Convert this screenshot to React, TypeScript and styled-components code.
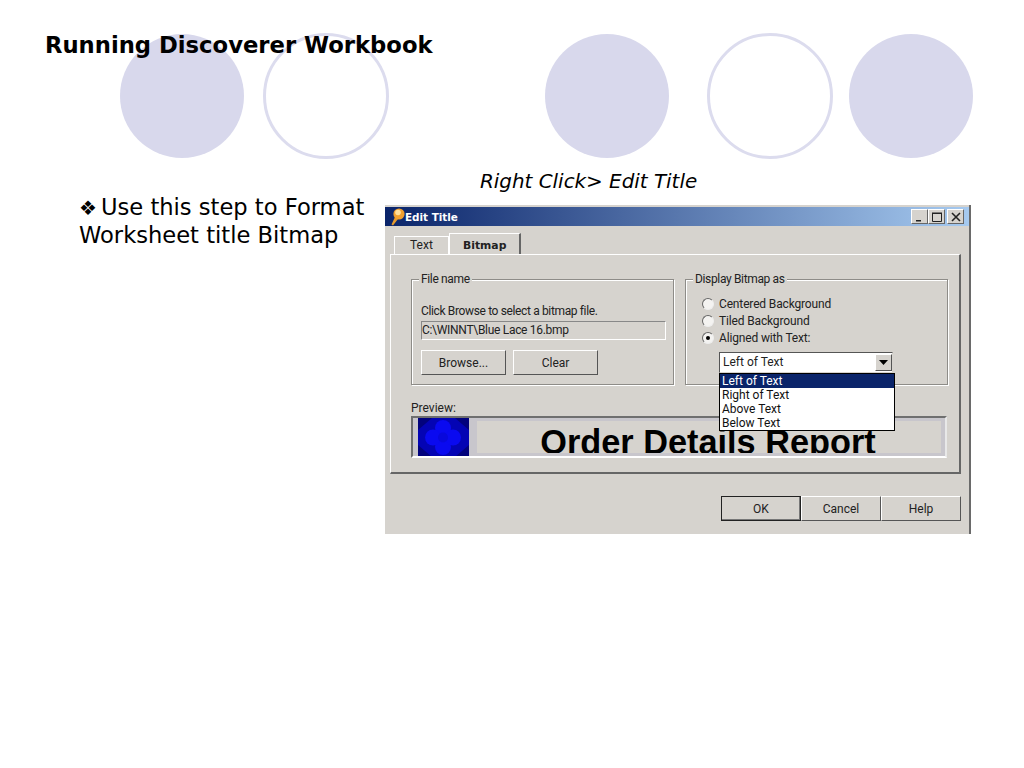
import styled, { createGlobalStyle } from 'styled-components'

const GlobalStyle = createGlobalStyle`
  html, body {
    margin: 0;
    padding: 0;
    background: #fff;
  }
`

const radioOptions = [
  { label: 'Centered Background', checked: false },
  { label: 'Tiled Background', checked: false },
  { label: 'Aligned with Text:', checked: true },
]

const menuOptions = ['Left of Text', 'Right of Text', 'Above Text', 'Below Text']

const KeyIcon = () => (
  <svg width="14" height="18" viewBox="0 0 14 18">
    <path d="M4 9 L0.5 16.5 L2 17.5 L7 11 Z" fill="#e59a2c" />
    <circle cx="8" cy="6" r="5.6" fill="#f0a030" />
    <circle cx="7" cy="4.5" r="2.8" fill="#ffdf9a" />
  </svg>
)

const LaceImage = () => (
  <svg width="51" height="39" viewBox="0 0 51 39">
    <rect width="51" height="39" fill="#0404b4" />
    <path d="M0 0 L14 0 L0 12 Z M51 0 L37 0 L51 12 Z M0 39 L14 39 L0 27 Z M51 39 L37 39 L51 27 Z" fill="#02027c" />
    <circle cx="25" cy="10" r="8" fill="#0a0af0" />
    <circle cx="25" cy="29" r="8" fill="#0a0af0" />
    <circle cx="15" cy="19.5" r="8" fill="#0a0af0" />
    <circle cx="35" cy="19.5" r="8" fill="#0a0af0" />
    <circle cx="25" cy="19.5" r="5" fill="#0808dc" />
  </svg>
)

export default function App() {
  return (
    <Slide>
      <GlobalStyle />
      <CircleRow>
        <Circle />
        <Circle $outline $gap={19} />
        <Circle $gap={156} />
        <Circle $outline $gap={38} />
        <Circle $gap={16} />
      </CircleRow>
      <Title>Running Discoverer Workbook</Title>
      <Body>
        <StepText>
          <Bullet>❖</Bullet>Use this step to Format Worksheet title Bitmap
        </StepText>
        <RightColumn>
          <Caption>Right Click&gt; Edit Title</Caption>
          <Dialog>
            <TitleBar>
              <KeyIcon />
              <TitleText>Edit Title</TitleText>
              <WindowButtons>
                <WindowButton>
                  <svg width="10" height="10" viewBox="0 0 10 10">
                    <rect x="1" y="8" width="5" height="1.5" fill="#222" />
                  </svg>
                </WindowButton>
                <WindowButton>
                  <svg width="10" height="10" viewBox="0 0 10 10">
                    <path d="M0.5 1.5 H9.5 V9.5 H0.5 Z" fill="none" stroke="#222" />
                    <rect x="0" y="0.5" width="10" height="1.5" fill="#222" />
                  </svg>
                </WindowButton>
                <WindowButton $spaced>
                  <svg width="10" height="10" viewBox="0 0 10 10">
                    <path d="M1 1 L9 9 M9 1 L1 9" stroke="#222" strokeWidth="1.6" />
                  </svg>
                </WindowButton>
              </WindowButtons>
            </TitleBar>
            <Tabs>
              <Tab>Text</Tab>
              <Tab $active>Bitmap</Tab>
            </Tabs>
            <Panel>
              <GroupRow>
                <GroupBox>
                  <Legend>File name</Legend>
                  <HelpText>Click Browse to select a bitmap file.</HelpText>
                  <PathField>C:\WINNT\Blue Lace 16.bmp</PathField>
                  <ButtonRow>
                    <PushButton $width={85}>Browse...</PushButton>
                    <PushButton $width={85}>Clear</PushButton>
                  </ButtonRow>
                </GroupBox>
                <GroupBox $right>
                  <Legend>Display Bitmap as</Legend>
                  <RadioList>
                    {radioOptions.map((option) => (
                      <RadioRow key={option.label}>
                        <Radio $checked={option.checked} />
                        {option.label}
                      </RadioRow>
                    ))}
                  </RadioList>
                  <SelectWrap>
                    <SelectBox>
                      Left of Text
                      <SelectArrow>
                        <svg width="9" height="5" viewBox="0 0 9 5">
                          <path d="M0 0 H9 L4.5 5 Z" fill="#000" />
                        </svg>
                      </SelectArrow>
                    </SelectBox>
                    <Menu>
                      {menuOptions.map((option, index) => (
                        <MenuItem key={option} $selected={index === 0}>
                          {option}
                        </MenuItem>
                      ))}
                    </Menu>
                  </SelectWrap>
                </GroupBox>
              </GroupRow>
              <PreviewLabel>Preview:</PreviewLabel>
              <PreviewBox>
                <LaceImage />
                <PreviewBand>
                  <PreviewTitle>Order Details Report</PreviewTitle>
                </PreviewBand>
              </PreviewBox>
            </Panel>
            <Footer>
              <PushButton $width={80} $default>OK</PushButton>
              <PushButton $width={80}>Cancel</PushButton>
              <PushButton $width={80}>Help</PushButton>
            </Footer>
          </Dialog>
        </RightColumn>
      </Body>
    </Slide>
  )
}

const Slide = styled.div`
  position: relative;
  width: 1024px;
  height: 768px;
  overflow: hidden;
  background: #fff;
  font-family: 'DejaVu Sans', Verdana, sans-serif;
  color: #000;
`

const CircleRow = styled.div`
  position: absolute;
  top: 33px;
  left: 120px;
  display: flex;
  align-items: center;
`

const Circle = styled.div<{ $outline?: boolean; $gap?: number }>`
  box-sizing: border-box;
  width: ${(p) => (p.$outline ? 126 : 124)}px;
  height: ${(p) => (p.$outline ? 126 : 124)}px;
  margin-left: ${(p) => p.$gap ?? 0}px;
  border-radius: 50%;
  background: ${(p) => (p.$outline ? 'transparent' : '#d8d8ec')};
  border: ${(p) => (p.$outline ? '3px solid #dcdcee' : 'none')};
`

const Title = styled.h1`
  position: relative;
  margin: 0;
  padding: 32px 0 0 45px;
  height: 138px;
  box-sizing: border-box;
  font-size: 22.7px;
  line-height: 26px;
  font-weight: bold;
`

const Body = styled.div`
  display: flex;
  padding-left: 79px;
`

const StepText = styled.p`
  width: 290px;
  margin: 55px 16px 0 0;
  font-size: 22.6px;
  line-height: 28px;
`

const Bullet = styled.span`
  display: inline-block;
  width: 22px;
  font-size: 20px;
  line-height: 20px;
`

const RightColumn = styled.div`
  display: flex;
  flex-direction: column;
`

const Caption = styled.div`
  height: 67px;
  padding: 31px 0 0 95px;
  box-sizing: border-box;
  font-size: 19.9px;
  line-height: 26px;
  font-style: italic;
`

const Dialog = styled.div`
  box-sizing: border-box;
  width: 586px;
  height: 329px;
  padding-top: 2px;
  background: #d6d3ce;
  border-right: 2px solid #6a6a6a;
  font-family: Roboto, 'Liberation Sans', Arial, sans-serif;
  font-size: 12px;
  color: #222;
  display: flex;
  flex-direction: column;
`

const TitleBar = styled.div`
  height: 19px;
  padding-left: 6px;
  display: flex;
  align-items: center;
  background: linear-gradient(90deg, #0a246a, #a6caf0);
`

const TitleText = styled.span`
  color: #fff;
  font-family: 'DejaVu Sans', Verdana, sans-serif;
  font-size: 10.4px;
  font-weight: bold;
`

const WindowButtons = styled.div`
  display: flex;
  margin-left: auto;
  margin-right: 5px;
`

const WindowButton = styled.div<{ $spaced?: boolean }>`
  box-sizing: border-box;
  width: 17px;
  height: 15px;
  margin-left: ${(p) => (p.$spaced ? 2 : 0)}px;
  display: flex;
  align-items: center;
  justify-content: center;
  background: #d6d3ce;
  border: 1px solid;
  border-color: #fff #666 #666 #fff;
`

const Tabs = styled.div`
  display: flex;
  align-items: flex-end;
  height: 28px;
  padding-left: 9px;
`

const Tab = styled.div<{ $active?: boolean }>`
  box-sizing: border-box;
  width: ${(p) => (p.$active ? 72 : 55)}px;
  height: ${(p) => (p.$active ? 22 : 18)}px;
  margin-bottom: ${(p) => (p.$active ? -1 : 0)}px;
  padding-left: ${(p) => (p.$active ? 13 : 15)}px;
  line-height: ${(p) => (p.$active ? 24 : 16)}px;
  font-weight: ${(p) => (p.$active ? 'bold' : 'normal')};
  font-family: ${(p) => (p.$active ? "'DejaVu Sans', Verdana, sans-serif" : 'inherit')};
  font-size: ${(p) => (p.$active ? 10.8 : 12)}px;
  background: #d6d3ce;
  border-top: 1px solid #fff;
  border-left: 1px solid #fff;
  border-right: ${(p) => (p.$active ? '2px solid #666' : '1px solid #fff')};
`

const Panel = styled.div`
  box-sizing: border-box;
  width: 571px;
  height: 220px;
  margin-left: 5px;
  padding: 24px 10px 0 20px;
  border-top: 1px solid #fff;
  border-left: 1px solid #fff;
  border-right: 2px solid #666;
  border-bottom: 2px solid #666;
`

const GroupRow = styled.div`
  display: flex;
  gap: 11px;
`

const GroupBox = styled.div<{ $right?: boolean }>`
  position: relative;
  box-sizing: border-box;
  width: 263px;
  height: 106px;
  padding: ${(p) => (p.$right ? '15px 0 0 16px' : '24px 0 0 9px')};
  border: 1px solid #8e8c88;
  box-shadow: 1px 1px 0 #fff, inset 1px 1px 0 #fff;
`

const Legend = styled.span`
  position: absolute;
  top: -8px;
  left: 7px;
  padding: 0 2px;
  line-height: 15px;
  letter-spacing: -0.35px;
  background: #d6d3ce;
`

const HelpText = styled.div`
  line-height: 15px;
  letter-spacing: -0.36px;
`

const PathField = styled.div`
  box-sizing: border-box;
  width: 245px;
  height: 19px;
  margin-top: 2px;
  line-height: 17px;
  letter-spacing: -0.3px;
  border: 1px solid;
  border-color: #888 #fff #fff #888;
`

const ButtonRow = styled.div`
  display: flex;
  gap: 7px;
  margin-top: 10px;
`

const PushButton = styled.div<{ $width: number; $default?: boolean }>`
  box-sizing: border-box;
  width: ${(p) => p.$width}px;
  height: 25px;
  display: flex;
  align-items: center;
  justify-content: center;
  background: #d6d3ce;
  border: 1px solid;
  border-color: ${(p) => (p.$default ? '#222' : '#fff #555 #555 #fff')};
  box-shadow: ${(p) => (p.$default ? 'inset -1px -1px 0 #777' : 'none')};
`

const RadioList = styled.div`
  display: flex;
  flex-direction: column;
`

const RadioRow = styled.div`
  display: flex;
  align-items: center;
  gap: 5px;
  height: 17.3px;
  letter-spacing: -0.15px;
`

const Radio = styled.span<{ $checked: boolean }>`
  box-sizing: border-box;
  position: relative;
  width: 12px;
  height: 12px;
  flex-shrink: 0;
  border-radius: 50%;
  background: #f4f3f1;
  border: 1px solid;
  border-color: #666 #eee #eee #666;

  &::after {
    content: '';
    display: ${(p) => (p.$checked ? 'block' : 'none')};
    position: absolute;
    top: 3px;
    left: 3px;
    width: 4px;
    height: 4px;
    border-radius: 50%;
    background: #000;
  }
`

const SelectWrap = styled.div`
  position: relative;
  margin: 5px 0 0 17px;
  width: 174px;
`

const SelectBox = styled.div`
  box-sizing: border-box;
  height: 21px;
  padding-left: 3px;
  display: flex;
  align-items: center;
  justify-content: space-between;
  background: #fff;
  border: 1px solid;
  border-color: #555 #d6d3ce #d6d3ce #555;
`

const SelectArrow = styled.span`
  box-sizing: border-box;
  width: 17px;
  height: 17px;
  display: flex;
  align-items: center;
  justify-content: center;
  background: #d6d3ce;
  border: 1px solid;
  border-color: #fff #555 #555 #fff;
`

const Menu = styled.div`
  position: absolute;
  top: 21px;
  left: 0;
  z-index: 2;
  box-sizing: border-box;
  width: 176px;
  height: 58px;
  background: #fff;
  border: 1px solid #000;
`

const MenuItem = styled.div<{ $selected: boolean }>`
  height: 14px;
  padding-left: 2px;
  line-height: 14px;
  color: ${(p) => (p.$selected ? '#fff' : '#111')};
  background: ${(p) => (p.$selected ? '#0a246a' : 'transparent')};
`

const PreviewLabel = styled.div`
  margin-top: 16px;
  line-height: 15px;
`

const PreviewBox = styled.div`
  box-sizing: border-box;
  width: 536px;
  height: 42px;
  padding: 0 4px 0 5px;
  display: flex;
  gap: 8px;
  background: #c8c6cc;
  border-top: 2px solid #6f6f6f;
  border-left: 2px solid #6f6f6f;
  border-bottom: 2px solid #fff;
  border-right: 2px solid #e8e8e8;
  overflow: hidden;
`

const PreviewBand = styled.div`
  flex: 1;
  margin-top: 3px;
  height: 32px;
  display: flex;
  justify-content: center;
  background: #d6d3ce;
  overflow: hidden;
`

const PreviewTitle = styled.span`
  margin-right: 2px;
  font-family: 'Liberation Sans', Arial, sans-serif;
  font-size: 34.3px;
  line-height: 43px;
  font-weight: bold;
  color: #000;
  white-space: nowrap;
`

const Footer = styled.div`
  display: flex;
  justify-content: flex-end;
  padding: 22px 8px 0 0;
`
